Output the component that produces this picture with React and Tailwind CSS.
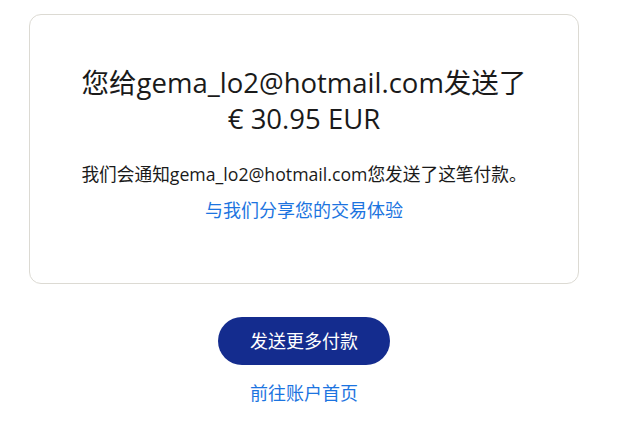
import React from "react";

export default function App() {
  const font = {
    fontFamily: '"Open Sans", "Noto Sans CJK SC", sans-serif',
  };

  return (
    <div className="w-[640px] h-[440px] bg-white" style={font}>
      <div className="ml-[29px] pt-[14px] w-[550px]">
        {/* 结果卡片 */}
        <div className="h-[270px] rounded-[12px] border border-[#dcdad3] flex flex-col items-center pt-[50px]">
          <h1 className="text-[27.5px] leading-[36px] text-[#1a1a1a] text-center whitespace-nowrap">
            您给gema_lo2@hotmail.com发送了
            <br />€ 30.95 EUR
          </h1>
          <p className="mt-[25px] text-[17.7px] leading-[24px] text-[#1a1a1a] text-center whitespace-nowrap">
            我们会通知gema_lo2@hotmail.com您发送了这笔付款。
          </p>
          <a className="mt-[12px] text-[18px] leading-[24px] text-[#1c74e0] cursor-pointer">
            与我们分享您的交易体验
          </a>
        </div>

        {/* 操作 */}
        <div className="flex flex-col items-center mt-[33px]">
          <button className="w-[172px] h-[48px] rounded-full bg-[#142c8e] text-white text-[18px]">
            发送更多付款
          </button>
          <a className="mt-[16px] text-[18px] leading-[24px] text-[#1c74e0] cursor-pointer">
            前往账户首页
          </a>
        </div>
      </div>
    </div>
  );
}
